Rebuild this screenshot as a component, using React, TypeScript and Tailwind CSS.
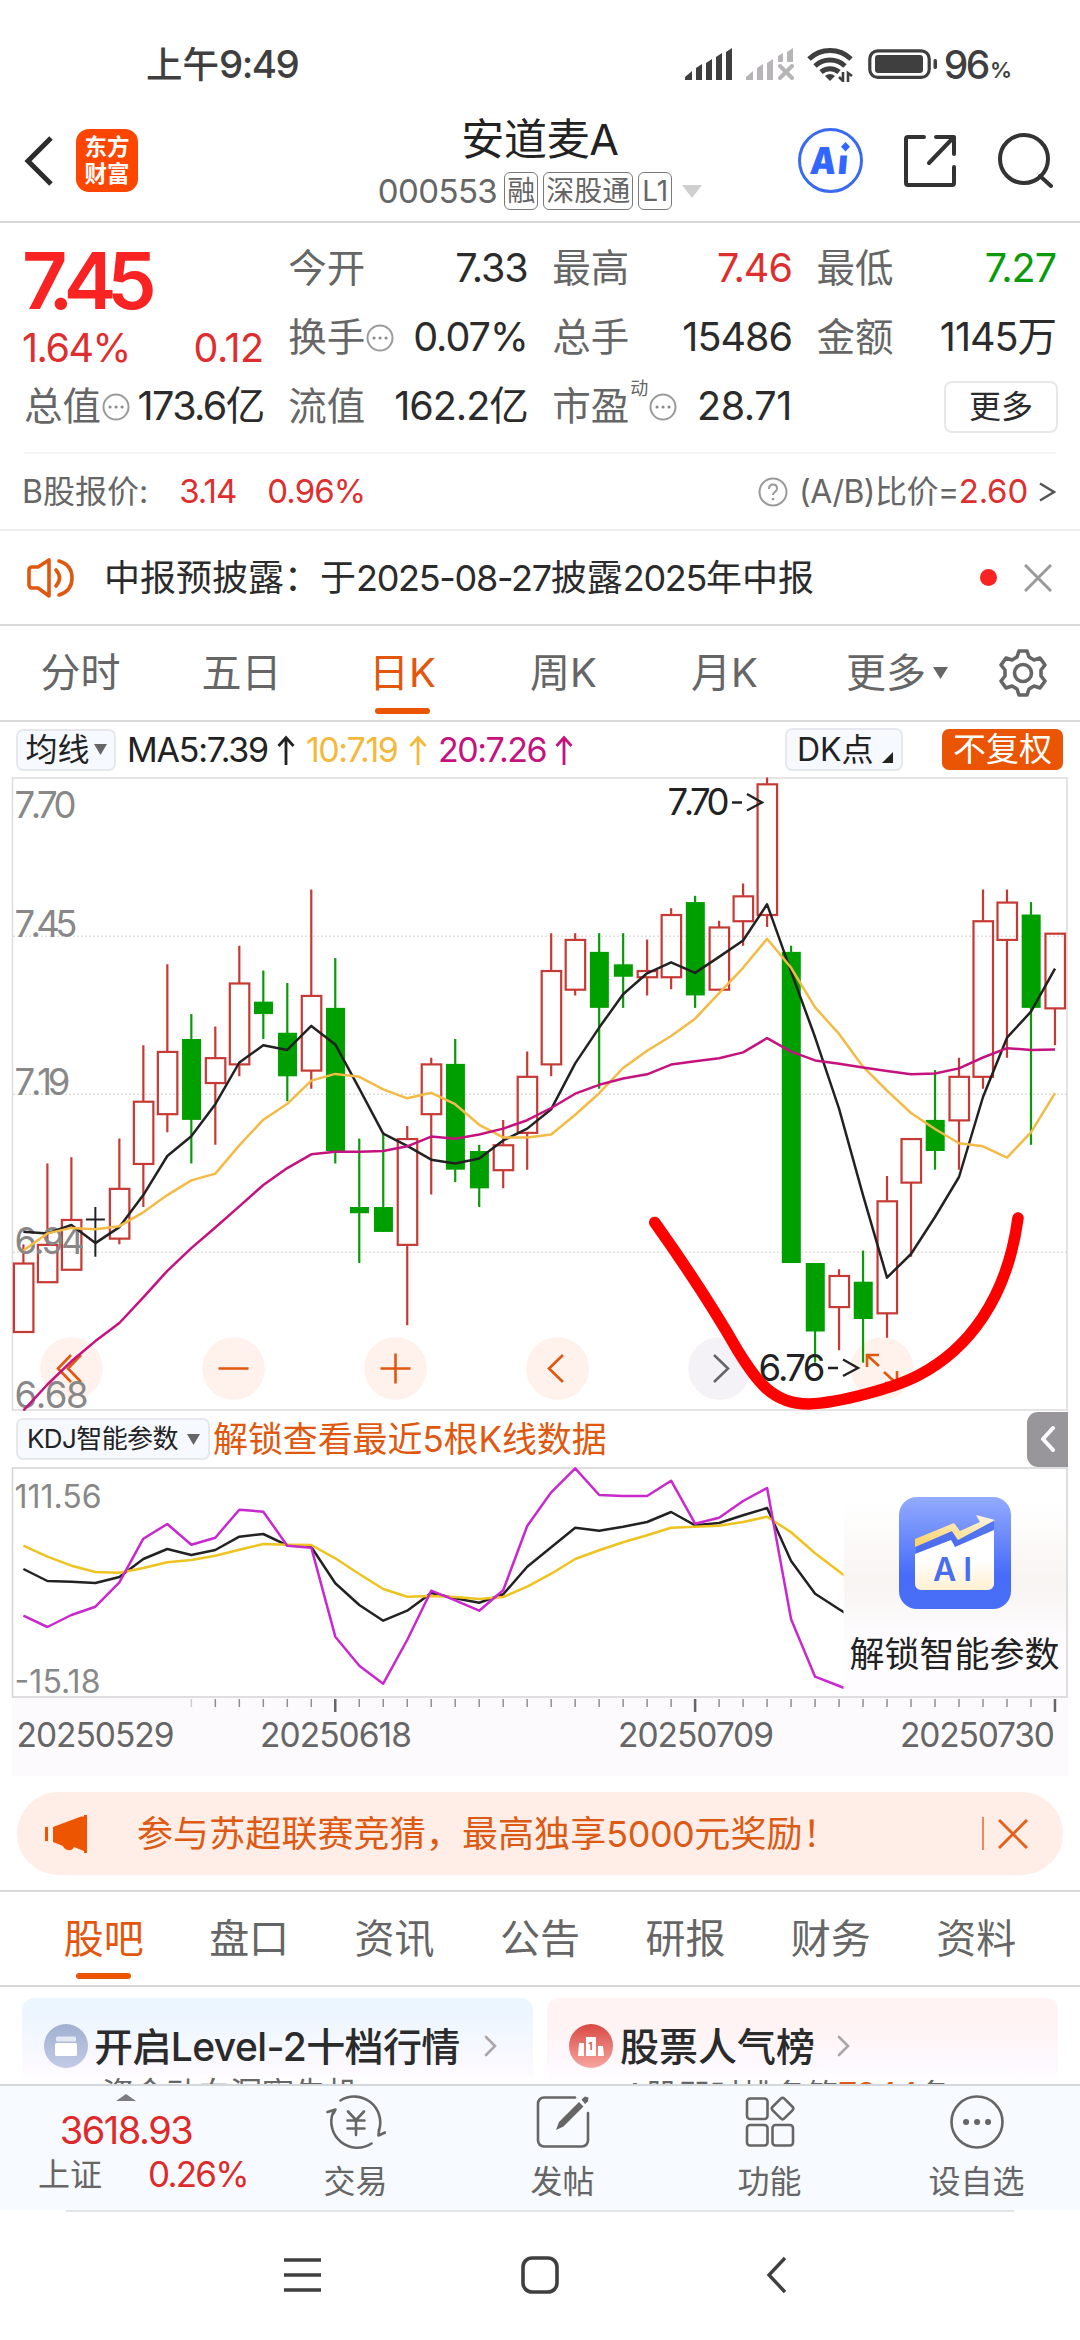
import type { ReactNode } from "react"
import { clsx } from "clsx"

// [body top, body bottom, high, low, direction]
type Candle = [number, number, number, number, "up" | "down" | "flat"]

const candles: Candle[] = [
    [6.92, 6.81, 6.95, 6.81, "up"],
    [6.95, 6.89, 7.08, 6.89, "up"],
    [6.99, 6.91, 7.09, 6.91, "up"],
    [6.99, 6.99, 7.01, 6.93, "flat"],
    [7.04, 6.96, 7.12, 6.95, "up"],
    [7.18, 7.08, 7.27, 7.01, "up"],
    [7.26, 7.16, 7.4, 7.13, "up"],
    [7.28, 7.15, 7.32, 7.08, "down"],
    [7.25, 7.21, 7.3, 7.11, "up"],
    [7.37, 7.24, 7.43, 7.22, "up"],
    [7.34, 7.32, 7.39, 7.28, "down"],
    [7.29, 7.22, 7.37, 7.18, "down"],
    [7.35, 7.23, 7.52, 7.2, "up"],
    [7.33, 7.1, 7.41, 7.08, "down"],
    [7.01, 7.0, 7.12, 6.92, "down"],
    [7.01, 6.97, 7.13, 6.97, "down"],
    [7.12, 6.95, 7.14, 6.82, "up"],
    [7.24, 7.16, 7.25, 7.03, "up"],
    [7.24, 7.07, 7.28, 7.05, "down"],
    [7.1, 7.04, 7.11, 7.01, "down"],
    [7.11, 7.07, 7.15, 7.04, "up"],
    [7.22, 7.13, 7.26, 7.07, "up"],
    [7.39, 7.24, 7.45, 7.22, "up"],
    [7.44, 7.36, 7.45, 7.35, "up"],
    [7.42, 7.33, 7.45, 7.2, "down"],
    [7.4, 7.38, 7.45, 7.33, "down"],
    [7.39, 7.38, 7.44, 7.35, "up"],
    [7.48, 7.38, 7.49, 7.36, "up"],
    [7.5, 7.35, 7.51, 7.33, "down"],
    [7.46, 7.36, 7.47, 7.36, "up"],
    [7.51, 7.47, 7.53, 7.43, "up"],
    [7.69, 7.48, 7.7, 7.46, "up"],
    [7.42, 6.92, 7.43, 6.92, "down"],
    [6.92, 6.81, 6.92, 6.76, "down"],
    [6.9, 6.85, 6.91, 6.78, "up"],
    [6.89, 6.83, 6.94, 6.76, "down"],
    [7.02, 6.84, 7.06, 6.8, "up"],
    [7.12, 7.05, 7.12, 6.93, "up"],
    [7.15, 7.1, 7.23, 7.07, "down"],
    [7.22, 7.15, 7.25, 7.07, "up"],
    [7.47, 7.22, 7.52, 7.2, "up"],
    [7.5, 7.44, 7.52, 7.25, "up"],
    [7.48, 7.33, 7.5, 7.11, "down"],
    [7.45, 7.33, 7.45, 7.27, "up"],
]

const ma5 = [461.7, 463.4, 455, 473.1, 457.1, 425.1, 386, 366.2, 334.2, 292.5, 275.3, 279.9, 255.9, 274.4, 318.6, 363.6, 375.8, 389.7, 393.5, 388.5, 370.4, 358.6, 339.2, 293.4, 257.6, 224.3, 203.3, 192.3, 202.9, 186.9, 170.5, 134.3, 201.6, 267.3, 338.8, 425.1, 507.6, 484, 447, 407, 327, 267.7, 241.6, 198.7]
const ma10 = [480.6, 463.4, 457.9, 459.2, 456.2, 442.3, 425.1, 410.4, 403.6, 375.4, 349.7, 333.8, 310.6, 303.9, 306.8, 319.4, 328.3, 322.8, 334.2, 354.8, 367.4, 367.4, 364.5, 344.7, 323.2, 298, 280.7, 266, 248.7, 223.1, 197.8, 168.8, 197.8, 237.4, 263.9, 296.7, 320.7, 343, 359, 373.3, 376.3, 387.6, 362.4, 323.2]
const ma20 = [640.6, 614.5, 591.3, 571.1, 553, 527.4, 500.8, 478.1, 457.5, 436.4, 415, 398.1, 384.3, 381.7, 381.7, 380.9, 376.3, 366.6, 368.7, 364.5, 358.6, 350.2, 338, 323.7, 314.8, 308.5, 304.3, 294.6, 291.2, 288.3, 282.4, 268.1, 281.6, 290.4, 293.8, 297.6, 300.9, 304.3, 303.5, 298.4, 287.5, 278.2, 279.9, 279.5]

const kLine = [169, 181, 181.7, 183, 177, 159, 149, 155, 150, 136.7, 134, 145.3, 147, 183.3, 205, 220.7, 210.7, 193, 198.3, 202.7, 194.3, 166.7, 147.3, 127.7, 130.7, 126.7, 122, 112, 125.3, 123, 115.3, 108, 161, 193.7, 209.3, 224]
const dLine = [145.7, 156.7, 165.7, 172, 172.7, 168, 162.3, 160, 155.7, 149.7, 144, 144.7, 145, 158.3, 174, 189, 196.7, 196, 197, 199, 197, 186.7, 173.7, 159, 150.3, 142.3, 135.3, 127.7, 126.7, 125.7, 122, 116.7, 132.3, 153.3, 171.5, 190]
const jLine = [215.7, 227, 215, 206.7, 182.3, 138.7, 124, 144.7, 137.7, 109.7, 111.7, 145.7, 147.7, 236.7, 265.7, 283.7, 240, 190.7, 200.3, 210.7, 190.3, 126, 92.3, 68.3, 95, 96, 96, 80.7, 123.7, 117.7, 101, 88, 219.3, 276.7, 286, 295]

const xAt = (i: number) => 23.4 + i * 23.99
const yAt = (price: number) => 7.6 + (7.7 - price) * 622.35
const toPoints = (ys: number[]) => ys.map((y, i) => `${xAt(i).toFixed(1)},${y}`).join(" ")

function StatusBar() {
    return (
        <div className="flex h-[128px] items-center pr-[69px] pl-[146px] text-[#3f3f3f]">
            <span className="text-[36.5px] leading-none font-medium">
                上午<span className="text-[38.5px] tracking-[-1.6px]">9:49</span>
            </span>
            <div className="ml-auto flex items-center">
                <svg width="48" height="32" viewBox="0 0 48 32" fill="#3f3f3f">
                    <path d="M0 32v-3l7-6v9zM11 32V20l6-4v16zM21 32V15l6-4v21zM31 32V9l6-4v27zM41 32V4l6-4v32z" />
                </svg>
                <svg className="ml-[13px]" width="48" height="32" viewBox="0 0 48 32" fill="#b6b4b7">
                    <path d="M0 32v-3l7-6v9zM11 32V20l6-4v16zM21 32V15l6-4v21zM32 14V8l5-3v9zM41 14V4l6-4v14z" />
                    <path d="M34 18l12 12M46 18L34 30" stroke="#b6b4b7" strokeWidth="4" strokeLinecap="round" />
                </svg>
                <svg className="ml-[13px]" width="47" height="36" viewBox="0 0 47 36" fill="none" stroke="#3f3f3f" strokeWidth="5">
                    <path d="M2 13A30 30 0 0 1 44 13" />
                    <path d="M8 20A22 22 0 0 1 38 20" />
                    <path d="M14 26A14 14 0 0 1 32 26" />
                    <path d="M18 30q5-4 10 0l-5 5z" fill="#3f3f3f" stroke="none" />
                    <path d="M36 26v9l-4-4M41 36v-9l4 3" strokeWidth="2.6" />
                </svg>
                <svg className="ml-[14px]" width="70" height="30" viewBox="0 0 70 30">
                    <rect x="1.8" y="1.8" width="59.4" height="26.6" rx="8" fill="none" stroke="#3f3f3f" strokeWidth="3.2" />
                    <rect x="7" y="6" width="48" height="18" rx="3" fill="#3f3f3f" />
                    <rect x="65.5" y="10" width="3.5" height="10" rx="1.7" fill="#3f3f3f" />
                </svg>
                <span className="ml-[6px] text-[39px] leading-none font-medium tracking-[-2.5px]">96</span>
                <span className="ml-[2px] pt-[11px] text-[22px] leading-none font-semibold tracking-[-1px]">%</span>
            </div>
        </div>
    )
}

function Tag({ children }: { children: ReactNode }) {
    return (
        <span className="flex h-[38px] min-w-[34px] items-center justify-center rounded-[6px] border border-[#7a7a7a] px-[2px] text-[28px] leading-none text-[#666]">
            {children}
        </span>
    )
}

function Header() {
    return (
        <header className="grid h-[95px] grid-cols-[340px_1fr_340px] border-b-2 border-[#d9d9d9]">
            <div className="flex items-center pb-[29px] pl-[24px]">
                <svg width="30" height="52" viewBox="0 0 30 52" fill="none" stroke="#2c2c2c" strokeWidth="5">
                    <path d="M27 3L4 26l23 23" />
                </svg>
                <div className="ml-[22px] flex h-[63px] w-[62px] shrink-0 flex-col items-center justify-center gap-[4px] rounded-[13px] bg-[#ff4600] text-[22.5px] leading-none font-bold text-white">
                    <span>东方</span>
                    <span>财富</span>
                </div>
            </div>
            <div className="-mt-[11px] flex flex-col items-center">
                <div className="text-[43px] leading-[44px] tracking-[-0.3px] text-[#222]">安道麦A</div>
                <div className="mt-[11px] flex items-center gap-[5px]">
                    <span className="mr-[2px] text-[33px] leading-none tracking-[-0.6px] text-[#666]">000553</span>
                    <Tag>融</Tag>
                    <Tag>深股通</Tag>
                    <Tag>L1</Tag>
                    <svg className="ml-[5px]" width="20" height="13" viewBox="0 0 20 13">
                        <path d="M0 0h20L10 13z" fill="#cfcfcf" />
                    </svg>
                </div>
            </div>
            <div className="flex items-center justify-end pr-[27px] pb-[29px]">
                <div className="flex h-[65px] w-[65px] items-center justify-center rounded-full border-[3.5px] border-[#3a6af0]">
                    <svg className="shrink-0" width="44" height="40" viewBox="0 0 44 40" fill="#3366ff">
                        <g transform="skewX(-5)" fontSize="37" fontWeight="900">
                            <text x="3" y="32.5" textLength="26" lengthAdjust="spacingAndGlyphs">A</text>
                            <text x="31" y="33.500" fontSize="34">ı</text>
                        </g>
                        <path d="M36.500 1l4.500 4.800-4.500 4.800-4.500-4.800z" />
                    </svg>
                </div>
                <svg className="ml-[39px]" width="56" height="56" viewBox="0 0 56 56" fill="none" stroke="#333" strokeWidth="4" strokeLinecap="round" strokeLinejoin="round">
                    <path d="M22 4H6a2 2 0 0 0-2 2v44a2 2 0 0 0 2 2h44a2 2 0 0 0 2-2V34M34 4h18v17M51 5L27 30" />
                </svg>
                <svg className="ml-[39px]" width="56" height="56" viewBox="0 0 56 56" fill="none" stroke="#333" strokeWidth="4" strokeLinecap="round">
                    <circle cx="27" cy="26" r="24" />
                    <path d="M43 43l11 10" />
                </svg>
            </div>
        </header>
    )
}

function Dots() {
    return (
        <svg className="ml-[1px] shrink-0" width="28" height="28" viewBox="0 0 28 28">
            <circle cx="14" cy="14" r="12.5" fill="none" stroke="#9a9a9a" strokeWidth="2" />
            <path d="M8 14h.1M14 14h.1M20 14h.1" stroke="#8a8a8a" strokeWidth="3" strokeLinecap="round" />
        </svg>
    )
}

interface FieldProps {
    label: string
    value: string
    valueClass?: string
    dots?: boolean
    sup?: string
}

function Field({ label, value, valueClass = "text-[#2b2b2b] tracking-[-1px]", dots, sup }: FieldProps) {
    return (
        <div className="flex h-[69px] items-center text-[38.5px] leading-none whitespace-nowrap text-[#666]">
            {label}
            {sup && <span className="-mt-[36px] pl-[1px] text-[18px]">{sup}</span>}
            {dots && <Dots />}
            <span className={clsx("ml-auto text-[39.5px]", valueClass)}>{value}</span>
        </div>
    )
}

function Quote() {
    return (
        <section className="px-[24px] pt-[11px] text-[#dd2f2f]">
            <div className="grid grid-cols-4 gap-x-[24.5px]">
                <div className="row-span-2 -ml-[2px]">
                    <div className="flex h-[92px] items-center text-[79px] leading-none font-semibold tracking-[-9.5px] text-[#f92323]">7.45</div>
                    <div className="flex h-[46px] items-center justify-between text-[39.5px] leading-none">
                        <span className="tracking-[-1.5px]">1.64%</span>
                        <span className="tracking-[-0.5px]">0.12</span>
                    </div>
                </div>
                <Field label="今开" value="7.33" />
                <Field label="最高" value="7.46" valueClass="text-[#dd2f2f] tracking-[-1px]" />
                <Field label="最低" value="7.27" valueClass="text-[#0a9a0a] tracking-[-1px]" />
                <Field label="换手" value="0.07%" dots />
                <Field label="总手" value="15486" />
                <Field label="金额" value="1145万" />
                <Field label="总值" value="173.6亿" dots valueClass="text-[#2b2b2b] tracking-[-1.6px]" />
                <Field label="流值" value="162.2亿" />
                <Field label="市盈" value="28.71" dots sup="动" valueClass="text-[#2b2b2b] tracking-[-0.4px]" />
                <div className="flex items-center justify-end">
                    <div className="-mr-[2px] flex h-[52px] w-[114px] items-center justify-center rounded-[8px] border-2 border-[#e9e7e9] text-[32px] text-[#2b2b2b]">更多</div>
                </div>
            </div>
            <div className="mt-[11px] flex h-[77px] items-center border-t-2 border-[#f4f4f4] text-[32px] leading-none whitespace-nowrap text-[#666]">
                <span className="-ml-[2px]">B股报价:</span>
                <span className="ml-[31px] text-[33px] tracking-[-1px] text-[#dd2f2f]">3.14</span>
                <span className="ml-[31px] text-[33px] tracking-[-0.9px] text-[#dd2f2f]">0.96%</span>
                <svg className="ml-auto" width="30" height="30" viewBox="0 0 30 30" fill="none" stroke="#9a9a9a" strokeWidth="2">
                    <circle cx="15" cy="15" r="13.5" />
                    <path d="M11 12q0-4.500 4-4.500t4 4q0 2-2 3.300t-2 3.200" />
                    <path d="M15 21v2.200" strokeWidth="2.5" />
                </svg>
                <span className="ml-[11px] tracking-[-0.5px]">(A/B)比价=</span>
                <span className="text-[33px] tracking-[-0.2px] text-[#dd2f2f]">2.60</span>
                <svg className="ml-[11px]" width="17" height="20" viewBox="0 0 17 20" fill="none" stroke="#555" strokeWidth="2.5">
                    <path d="M1 1.500L15 10 1 18.500" />
                </svg>
            </div>
        </section>
    )
}

function Notice() {
    return (
        <div className="flex h-[97px] items-center border-t-2 border-b-2 border-t-[#ececec] border-b-[#d9d9d9] pr-[28px] pl-[27px]">
            <svg width="48" height="42" viewBox="0 0 48 42" fill="none" stroke="#e0580f" strokeWidth="3.6" strokeLinejoin="round" strokeLinecap="round">
                <path d="M22 3v36L11 31H5a3 3 0 0 1-3-3V13a3 3 0 0 1 3-3h6z" />
                <path d="M29 13q7 8 0 16M32 4q13 4 13 17T32 38" />
            </svg>
            <span className="ml-[29px] text-[36px] leading-none whitespace-nowrap text-[#2b2b2b]">
                中报预披露：于<span className="tracking-[-1.3px]">2025-08-27</span>披露<span className="tracking-[-1.3px]">2025</span>年中报
            </span>
            <span className="ml-auto h-[17px] w-[17px] rounded-full bg-[#f92323]" />
            <svg className="ml-[27px]" width="28" height="28" viewBox="0 0 28 28" stroke="#9a9a9a" strokeWidth="3">
                <path d="M1 1l26 26M27 1L1 27" />
            </svg>
        </div>
    )
}

function PeriodTabs() {
    const tabs = ["分时", "五日", "日K", "周K", "月K"]
    return (
        <nav className="flex h-[96px] items-center border-b-2 border-[#d9d9d9] text-[40px] leading-none text-[#666]">
            {tabs.map((t) => (
                <div key={t} className={clsx("relative flex h-full w-[161px] items-center justify-center", t === "日K" && "text-[#e2560d]")}>
                    {t}
                    {t === "日K" && <span className="absolute bottom-[6px] h-[6px] w-[55px] rounded-full bg-[#ea5504]" />}
                </div>
            ))}
            <div className="ml-[41px] flex items-center">
                更多
                <svg className="ml-[7px]" width="15" height="12" viewBox="0 0 15 12">
                    <path d="M0 0h15L7.500 12z" fill="#666" />
                </svg>
            </div>
            <svg className="ml-[50px]" width="50" height="50" viewBox="0 0 50 50" fill="none" stroke="#666" strokeWidth="3.6" strokeLinejoin="round">
                <path d="M21 3h8l2 6 5 3 6-2 5 7-4 5v6l4 5-5 7-6-2-5 3-2 6h-8l-2-6-5-3-6 2-5-7 4-5v-6l-4-5 5-7 6 2 5-3z" />
                <circle cx="25" cy="25" r="8.5" />
            </svg>
        </nav>
    )
}

function Arrow({ className = "text-[#222]" }: { className?: string }) {
    return (
        <svg className={className} width="18" height="30" viewBox="0 0 18 30" fill="none" stroke="currentColor" strokeWidth="2.8">
            <path d="M9 30V2M1.500 11L9 2.500 16.500 11" />
        </svg>
    )
}

function ChartToolbar() {
    return (
        <div className="flex h-[55px] items-center pr-[17px] pl-[16px] text-[34px] leading-none whitespace-nowrap">
            <div className="flex h-[42px] w-[100px] items-center justify-center rounded-[7px] border-2 border-[#e6e8ee] bg-[#f6f9ff] text-[32px] text-[#222]">
                均线
                <svg className="ml-[4px]" width="13" height="11" viewBox="0 0 13 11">
                    <path d="M0 0h13L6.500 11z" fill="#666" />
                </svg>
            </div>
            <div className="ml-[11px] w-[150px] tracking-[-1.2px] text-[#222]">MA5:7.39</div>
            <Arrow />
            <div className="ml-[11px] w-[103px] tracking-[-1.5px] text-[#f3b93c]">10:7.19</div>
            <Arrow className="text-[#f3b93c]" />
            <div className="ml-[11px] w-[117px] tracking-[-1.5px] text-[#c4127f]">20:7.26</div>
            <Arrow className="text-[#c4127f]" />
            <div className="ml-auto flex h-[43px] w-[118px] items-center rounded-[7px] border-2 border-[#e6e8ee] bg-[#f6f9ff] pl-[10px] text-[32px] text-[#222]">
                DK点
                <svg className="mt-[16px] ml-[8px]" width="11" height="11" viewBox="0 0 11 11">
                    <path d="M11 0v11H0z" fill="#222" />
                </svg>
            </div>
            <div className="ml-[39px] flex h-[41px] w-[121px] items-center justify-center rounded-[7px] bg-[#ea5504] text-[33px] text-white">不复权</div>
        </div>
    )
}

function CandleShape({ data, index }: { data: Candle; index: number }) {
    const [top, bottom, high, low, dir] = data
    const x = xAt(index)
    if (dir === "up") {
        return (
            <g stroke="#c63a35" strokeWidth="2.2" fill="none">
                <path d={`M${x} ${yAt(high)}V${yAt(top)}M${x} ${yAt(bottom)}V${yAt(low)}`} />
                <rect x={x - 9.5} y={yAt(top) + 0.5} width="19.5" height={yAt(bottom) - yAt(top)} />
            </g>
        )
    }
    if (dir === "down") {
        return (
            <g>
                <path d={`M${x} ${yAt(high)}V${yAt(low)}`} stroke="#0a9a0a" strokeWidth="2.2" />
                <rect x={x - 9.3} y={yAt(top)} width="19" height={yAt(bottom) - yAt(top)} fill="#009f00" />
            </g>
        )
    }
    return <path d={`M${x} ${yAt(high)}V${yAt(low)}M${x - 9.5} ${yAt(top)}h19`} stroke="#222" strokeWidth="2" />
}

function KLineChart() {
    return (
        <svg className="block" width="1080" height="634" viewBox="0 7 1080 634">
            <rect x="12.5" y="8" width="1054.5" height="632" fill="none" stroke="#dedede" strokeWidth="1.6" />
            <path d="M13 166.200H1067M13 324.200H1067M13 482.200H1067" stroke="#cfcfcf" strokeDasharray="2 2" />

            {/* floating zoom / pan buttons */}
            {[71.5, 233.5, 395.5, 557.5, 882].map((cx) => (
                <circle key={cx} cx={cx} cy="598.5" r="31.3" fill="#fff1ec" />
            ))}
            <circle cx="719.5" cy="598.5" r="31.3" fill="#f5f2f7" />
            <g fill="none" stroke="#e0580f" strokeWidth="2.6">
                <path d="M71 585L58 598.500 71 612M81 585L68 598.500 81 612" />
                <path d="M218.500 598.500h30M380.500 598.500h30M395.500 583.500v30M563 585L549 598.500 563 612" />
                <path d="M867 597v-12h12M868 586l11 10M884 602l12 11M897 601v12h-12" />
            </g>
            <path d="M714 585l14 13.500L714 612" fill="none" stroke="#666" strokeWidth="2.6" />

            {candles.map((c, i) => (
                <CandleShape key={i} data={c} index={i} />
            ))}
            <g fill="#888" fontSize="36.5" className="[font-kerning:none]">
                <text x="14.5" y="47.5" textLength="62">7.70</text>
                <text x="14.5" y="167" textLength="63">7.45</text>
                <text x="14.5" y="325" textLength="56">7.19</text>
                <text x="14.5" y="483.5" textLength="70">6.94</text>
                <text x="14.5" y="637.5" textLength="74">6.68</text>
            </g>
            <g fill="none" strokeWidth="2.5" strokeLinejoin="round">
                <polyline points={toPoints(ma5)} stroke="#222" />
                <polyline points={toPoints(ma10)} stroke="#f3bb45" />
                <polyline points={toPoints(ma20)} stroke="#c4127f" />
            </g>
            <g fill="#222" fontSize="36.5" className="[font-kerning:none]">
                <text x="667.5" y="45" textLength="62">7.70</text>
                <text x="758.5" y="611" textLength="67">6.76</text>
            </g>
            <g fill="none" stroke="#222" strokeWidth="2.4">
                <path d="M732 32.500h10M747 24l15 8.500-15 8" />
                <path d="M828 598h10M843 589.500l15 8.500-15 8" />
            </g>

            <path
                d="M654.700 452.400C690 502 722 553 738 581C756 610 772 634 808.600 634C838 633 895 618 919 605C967 580 1007 530 1018 448"
                fill="none"
                stroke="#ff0000"
                strokeWidth="11.5"
                strokeLinecap="round"
            />
        </svg>
    )
}

function KdjToolbar() {
    return (
        <div className="flex h-[56px] items-center pl-[16px] leading-none whitespace-nowrap">
            <div className="flex h-[42px] w-[194px] items-center rounded-[7px] border-2 border-[#e6e8ee] bg-[#f6f9ff] pl-[9px] text-[26px] tracking-[-0.6px] text-[#222]">
                KDJ智能参数
                <svg className="ml-[9px]" width="13" height="11" viewBox="0 0 13 11">
                    <path d="M0 0h13L6.500 11z" fill="#666" />
                </svg>
            </div>
            <span className="ml-[3px] text-[35px] tracking-[-0.1px] text-[#e0580f]">解锁查看最近5根K线数据</span>
            <div className="mr-[12px] ml-auto flex h-[55px] w-[41px] items-center justify-center rounded-l-[11px] bg-[#99969b]">
                <svg width="15" height="26" viewBox="0 0 15 26" fill="none" stroke="#fff" strokeWidth="4" strokeLinecap="round" strokeLinejoin="round">
                    <path d="M13 2L3 13l10 11" />
                </svg>
            </div>
        </div>
    )
}

function UnlockPanel() {
    return (
        <div className="absolute top-[2px] left-[843.5px] flex h-[227px] w-[222px] flex-col items-center bg-linear-to-b from-white from-15% via-[#f8f4f2] via-50% to-[#fefcff] to-75% pt-[28px]">
            <svg width="112" height="112" viewBox="0 0 112 112">
                <defs>
                    <linearGradient id="tile" x1="0" y1="0" x2="0" y2="1">
                        <stop offset="0" stopColor="#93abff" />
                        <stop offset="0.7" stopColor="#466cf8" />
                        <stop offset="1" stopColor="#4a6ef5" />
                    </linearGradient>
                    <linearGradient id="gold" x1="0" y1="1" x2="1" y2="0">
                        <stop offset="0" stopColor="#fbd163" />
                        <stop offset="1" stopColor="#fff7e4" />
                    </linearGradient>
                    <linearGradient id="paper" x1="0" y1="0" x2="0" y2="1">
                        <stop offset="0.5" stopColor="#fff" />
                        <stop offset="1" stopColor="#fff0d0" />
                    </linearGradient>
                </defs>
                <rect width="112" height="112" rx="18" fill="url(#tile)" />
                <path d="M17 50l36-16 5 9 37-19v10L58 53l-5-9-36 18z" fill="#3558e0" opacity="0.5" />
                <path d="M16 57l36-14 4 7 39-17v54a6 6 0 0 1-6 6H22a6 6 0 0 1-6-6z" fill="url(#paper)" />
                <path d="M16 42l39-16 6 8 20-9-4-7 19 5-37 20-6-9-37 16z" fill="url(#gold)" />
                <text x="34" y="84" fontSize="32" fontWeight="600" fill="#4a6cf0" textLength="39">AI</text>
            </svg>
            <div className="mt-[28px] text-[35px] leading-none whitespace-nowrap text-[#222]">解锁智能参数</div>
        </div>
    )
}

function KdjChart() {
    return (
        <div className="relative h-[310px]">
            <svg className="block" width="1080" height="310" viewBox="0 67 1080 310">
                <defs>
                    <clipPath id="kdj-area">
                        <rect x="13" y="67" width="830.5" height="231" />
                    </clipPath>
                </defs>
                <rect x="12" y="298" width="1056" height="78" fill="#fdfafe" />
                <rect x="12.5" y="68" width="1054.5" height="229" fill="#fff" stroke="#d6d6d6" strokeWidth="1.6" />
                <g clipPath="url(#kdj-area)" fill="none" strokeWidth="2.5" strokeLinejoin="round">
                    <polyline points={toPoints(kLine)} stroke="#222" />
                    <polyline points={toPoints(dLine)} stroke="#eec31f" />
                    <polyline points={toPoints(jLine)} stroke="#c828cd" />
                </g>
                <g stroke="#8f8f8f" strokeWidth="1.5">
                    {candles.map((_, i) => i > 6 && <path key={i} d={`M${xAt(i)} 299v8`} opacity={i === 7 ? 0.4 : 1} />)}
                </g>
                <path d={`M${xAt(13)} 299v13M${xAt(28)} 299v13M${xAt(43)} 299v13`} stroke="#666" strokeWidth="2.5" />
                <g fill="#888" fontSize="32">
                    <text x="14.5" y="108" textLength="87">111.56</text>
                    <text x="14.5" y="293" textLength="86">-15.18</text>
                </g>
                <g fill="#666" fontSize="33.5">
                    <text x="16.5" y="347" textLength="158">20250529</text>
                    <text x="260" y="347" textLength="152">20250618</text>
                    <text x="618" y="347" textLength="156">20250709</text>
                    <text x="900" y="347" textLength="155">20250730</text>
                </g>
            </svg>
            <UnlockPanel />
        </div>
    )
}

function Banner() {
    return (
        <div className="mx-[17px] mt-[15px] flex h-[83px] items-center rounded-full bg-[#ffeee7] pr-[35px] pl-[28px]">
            <svg width="43" height="38" viewBox="0 0 43 38" fill="#ee5500">
                <path d="M0 12h3v14H0zM8 12L36 1.500h3V0h3v38h-3v-2L29 32q-2 4-6 3t-5-4l-10-4z" />
            </svg>
            <span className="ml-[49px] pt-[1px] text-[36px] leading-none tracking-[0.1px] whitespace-nowrap text-[#dc5a14]">
                参与苏超联赛竞猜，最高独享<span className="tracking-[-0.5px]">5000</span>元奖励！
            </span>
            <span className="ml-auto h-[33px] w-[2px] bg-[#e98a5a]" />
            <svg className="ml-[14px]" width="30" height="30" viewBox="0 0 30 30" stroke="#e2611c" strokeWidth="3">
                <path d="M1 1l28 28M29 1L1 29" />
            </svg>
        </div>
    )
}

function InfoTabs() {
    const tabs = ["股吧", "盘口", "资讯", "公告", "研报", "财务", "资料"]
    return (
        <nav className="mt-[15px] flex h-[97px] border-t-2 border-b-2 border-[#d9d9d9] px-[31px] text-[40px] leading-none text-[#666]">
            {tabs.map((t, i) => (
                <div key={t} className={clsx("relative flex flex-1 items-center justify-center", i === 0 && "text-[#e2560d]")}>
                    {t}
                    {i === 0 && <span className="absolute bottom-[6px] h-[6px] w-[55px] rounded-full bg-[#ea5504]" />}
                </div>
            ))}
        </nav>
    )
}

function Chevron() {
    return (
        <svg width="13" height="22" viewBox="0 0 13 22" fill="none" stroke="#aaa6a8" strokeWidth="2.6" strokeLinecap="round">
            <path d="M2 2l9 9-9 9" />
        </svg>
    )
}

function PromoCards() {
    return (
        <div className="flex h-[97px] gap-[14px] overflow-hidden px-[22px] pt-[11px]">
            <div className="h-[140px] flex-1 rounded-[12px] bg-linear-to-b from-[#ecf6ff] from-10% via-[#fcf9ff] via-50% to-white to-60% pt-[25px] whitespace-nowrap">
                <div className="flex h-[46px] items-center pl-[22px] text-[39px] leading-none font-medium text-[#2b2b2b]">
                    <svg className="mr-[6px]" width="44" height="44" viewBox="0 0 44 44">
                        <defs>
                            <linearGradient id="level" x1="0" y1="0" x2="0" y2="1">
                                <stop offset="0" stopColor="#a0b0d0" />
                                <stop offset="1" stopColor="#c2cbe6" />
                            </linearGradient>
                        </defs>
                        <circle cx="22" cy="22" r="22" fill="url(#level)" />
                        <rect x="12" y="12.5" width="20" height="5" rx="1.5" fill="#e3e8f5" />
                        <rect x="11" y="19" width="22" height="13" rx="1.5" fill="#fff" />
                    </svg>
                    <span className="mr-[24px] tracking-[-0.6px]">开启Level-2十档行情</span>
                    <Chevron />
                </div>
                <div className="mt-[9px] pl-[80px] text-[32px] leading-none text-[#666]">资金动向洞察先机</div>
            </div>
            <div className="h-[140px] flex-1 rounded-[12px] bg-linear-to-b from-[#fff3f3] from-20% via-[#fdf8fe] via-45% to-white to-60% pt-[25px] whitespace-nowrap">
                <div className="flex h-[46px] items-center pl-[22px] text-[39px] leading-none font-medium text-[#2b2b2b]">
                    <svg className="mr-[7px]" width="44" height="44" viewBox="0 0 44 44">
                        <defs>
                            <linearGradient id="rank" x1="0" y1="0" x2="0" y2="1">
                                <stop offset="0" stopColor="#d94a44" />
                                <stop offset="1" stopColor="#f7a5a0" />
                            </linearGradient>
                        </defs>
                        <circle cx="22" cy="22" r="22" fill="url(#rank)" />
                        <path d="M10 19h5v13H9zM17 13h10v19H17zM29 22h5l1 10h-6z" fill="#fff" />
                        <text x="19.3" y="26" fontSize="10" fontWeight="700" fill="#dc5a54">1</text>
                    </svg>
                    <span className="mr-[22px]">股票人气榜</span>
                    <Chevron />
                </div>
                <div className="mt-[9px] pl-[77px] text-[32px] leading-none text-[#666]">
                    A股即时排名第<span className="text-[34px] tracking-[-1px] text-[#dc5a14]">7944</span>名
                </div>
            </div>
        </div>
    )
}

const actions: { label: string; icon: ReactNode }[] = [
    {
        label: "交易",
        icon: (
            <>
                <path d="M14.500 7.500A26 26 0 0 1 53 37.500M45.500 50.500A26 26 0 0 1 7 19.500" />
                <path d="M1.500 19l8-2.500-2 4M59 39.500l-6.500 3 .500-6" />
                <path d="M22 18.500l8 8.500 8-8.500M30 27v15M21.500 27.500h17M21.500 35.500h17" />
            </>
        ),
    },
    {
        label: "发帖",
        icon: (
            <>
                <path d="M42 4.500H11a6 6 0 0 0-6 6v37a6 6 0 0 0 6 6h38a6 6 0 0 0 6-6V20" />
                <path d="M23 37l3-8 20-20 4.500 4.500-20 20zM48.500 6.500l3.500-3 3.500 1-.500 4-3 2.500z" fill="#666" stroke="none" />
            </>
        ),
    },
    {
        label: "功能",
        icon: (
            <>
                <rect x="7" y="5.5" width="20.5" height="20.5" rx="3" />
                <rect x="7" y="32" width="20.5" height="20.5" rx="3" />
                <rect x="32.5" y="32" width="20.5" height="20.5" rx="3" />
                <rect x="34.3" y="7.3" width="16.5" height="16.5" rx="2.5" transform="rotate(45 42.550 15.550)" />
            </>
        ),
    },
    {
        label: "设自选",
        icon: (
            <>
                <circle cx="30" cy="29" r="25.5" />
                <path d="M19 29h.1M30 29h.1M41 29h.1" strokeWidth="6" />
            </>
        ),
    },
]

function BottomBar() {
    return (
        <div className="flex h-[126px] border-t-2 border-[#d3d8df] bg-[#f7faff]">
            <div className="flex w-[252px] flex-col items-center leading-none whitespace-nowrap">
                <svg className="mt-[8px] shrink-0" width="20" height="7" viewBox="0 0 20 7">
                    <path d="M0 7h20L10 0z" fill="#7c7c80" />
                </svg>
                <div className="mt-[10px] text-[38px] tracking-[-1.5px] text-[#dd2a2a]">3618.93</div>
                <div className="mt-[8px] flex w-full items-center pl-[38px] text-[32px] text-[#666]">
                    上证
                    <span className="ml-[46px] text-[35px] tracking-[-1.8px] text-[#dd2a2a]">0.26%</span>
                </div>
            </div>
            {actions.map((a) => (
                <div key={a.label} className="flex w-[207px] flex-col items-center pt-[7px]">
                    <svg width="60" height="58" viewBox="0 0 60 58" fill="none" stroke="#666" strokeWidth="2.6" strokeLinecap="round" strokeLinejoin="round">
                        {a.icon}
                    </svg>
                    <span className="mt-[15px] text-[32px] leading-none text-[#666]">{a.label}</span>
                </div>
            ))}
        </div>
    )
}

function SystemNav() {
    return (
        <div className="flex-1">
            <div className="mx-[66px] h-[2px] bg-[#e4e4e6]" />
            <div className="flex items-center pt-[44px] pl-[284px]">
                <svg width="38" height="38" viewBox="0 0 38 38" stroke="#3f3f3f" strokeWidth="3.6">
                    <path d="M0 4h37M0 19h37M0 34h37" />
                </svg>
                <svg className="ml-[199px]" width="38" height="38" viewBox="0 0 38 38" fill="none" stroke="#3f3f3f" strokeWidth="3.6">
                    <rect x="2" y="2" width="34" height="34" rx="9" />
                </svg>
                <svg className="ml-[207px]" width="22" height="38" viewBox="0 0 22 38" fill="none" stroke="#3f3f3f" strokeWidth="3.4">
                    <path d="M19 2L3 19l16 17" />
                </svg>
            </div>
        </div>
    )
}

export default function App() {
    return (
        <main className="flex h-[2340px] w-[1080px] flex-col overflow-hidden bg-white font-['Inter','Noto_Sans_CJK_SC',sans-serif] *:shrink-0" lang="zh-CN">
            <StatusBar />
            <Header />
            <Quote />
            <Notice />
            <PeriodTabs />
            <ChartToolbar />
            <KLineChart />
            <KdjToolbar />
            <KdjChart />
            <Banner />
            <InfoTabs />
            <PromoCards />
            <BottomBar />
            <SystemNav />
        </main>
    )
}
